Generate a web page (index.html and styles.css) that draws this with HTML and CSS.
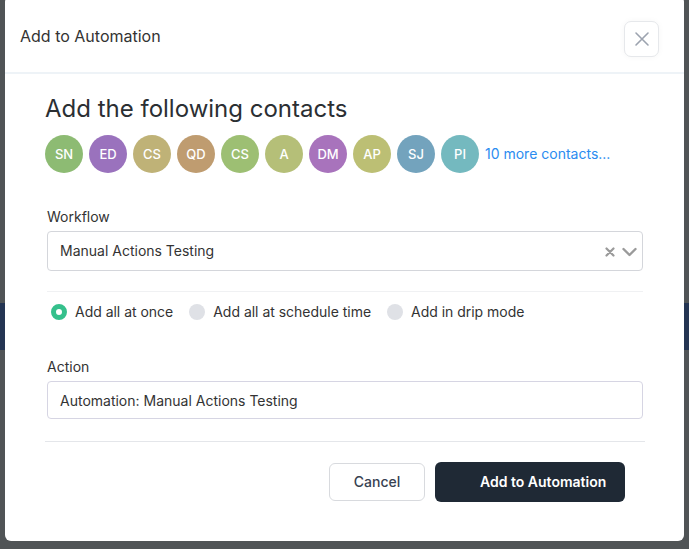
FILE: index.html
```html
<!DOCTYPE html>
<html>
<head>
<meta charset="utf-8">
<link rel="stylesheet" href="styles.css">
</head>
<body>
<div class="backdrop">
  <div class="page-band"></div>
</div>
<div class="modal">
  <div class="modal-header">
    <div class="modal-title">Add to Automation</div>
    <button class="close-btn" aria-label="Close">
      <svg width="16" height="16" viewBox="0 0 16 16"><path d="M2 2 L14 14 M14 2 L2 14" stroke="#9ca3af" stroke-width="1.6" stroke-linecap="round" fill="none"/></svg>
    </button>
  </div>
  <div class="modal-body">
    <h2 class="heading">Add the following contacts</h2>
    <div class="avatars">
      <span class="avatar c1">SN</span>
      <span class="avatar c2">ED</span>
      <span class="avatar c3">CS</span>
      <span class="avatar c4">QD</span>
      <span class="avatar c5">CS</span>
      <span class="avatar c6">A</span>
      <span class="avatar c7">DM</span>
      <span class="avatar c8">AP</span>
      <span class="avatar c9">SJ</span>
      <span class="avatar c10">PI</span>
      <a class="more-link">10 more contacts...</a>
    </div>
    <div class="form">
      <div class="label label-first">Workflow</div>
      <div class="select">
        <span class="select-value">Manual Actions Testing</span>
        <span class="select-icons">
          <svg width="10" height="10" viewBox="0 0 10 10"><path d="M1.5 1.5 L8.5 8.5 M8.5 1.5 L1.5 8.5" stroke="#9a9a9a" stroke-width="2.2" stroke-linecap="round" fill="none"/></svg>
          <svg width="15" height="10" viewBox="0 0 15 10"><path d="M1.5 2 L7.5 8 L13.5 2" stroke="#9a9a9a" stroke-width="2.4" stroke-linecap="round" stroke-linejoin="round" fill="none"/></svg>
        </span>
      </div>
      <div class="divider-light"></div>
      <div class="radios">
        <label class="radio"><span class="dot checked"></span>Add all at once</label>
        <label class="radio"><span class="dot"></span>Add all at schedule time</label>
        <label class="radio"><span class="dot"></span>Add in drip mode</label>
      </div>
      <div class="label label-action">Action</div>
      <div class="input">Automation: Manual Actions Testing</div>
    </div>
    <div class="divider"></div>
    <div class="actions">
      <button class="btn btn-cancel">Cancel</button>
      <button class="btn btn-primary">Add to Automation</button>
    </div>
  </div>
</div>
</body>
</html>
```

FILE: styles.css
```css
* { box-sizing: border-box; }

html, body {
  margin: 0;
  padding: 0;
  width: 689px;
  height: 549px;
  overflow: hidden;
}

body {
  background: #505456;
  font-family: Inter, "Noto Sans", sans-serif;
  color: #333333;
  position: relative;
}

.backdrop {
  position: absolute;
  inset: 0;
  background: #505456;
}

.page-band {
  margin-top: 303px;
  height: 47px;
  background: #243553;
}

.modal {
  position: absolute;
  left: 5px;
  top: -4px;
  width: 679px;
  height: 545px;
  background: #ffffff;
  border-radius: 6px;
  display: flex;
  flex-direction: column;
}

.modal-header {
  height: 78px;
  border-bottom: 2px solid #eef3f7;
  display: flex;
  align-items: center;
  justify-content: space-between;
  padding: 0 25px 0 15px;
}

.modal-title {
  font-size: 16px;
  line-height: 20px;
  color: #333333;
  margin-top: 4px;
}

.close-btn {
  width: 35px;
  height: 36px;
  border: 1px solid #e6e8eb;
  border-radius: 7px;
  background: #ffffff;
  display: flex;
  align-items: center;
  justify-content: center;
  padding: 0;
  margin-top: 9px;
  box-shadow: 0 0 6px rgba(0, 0, 0, 0.04);
}

.modal-body {
  padding: 20px 39px 0 40px;
}

.heading {
  margin: 0;
  font-size: 24px;
  line-height: 30px;
  font-weight: 400;
  color: #2b2f33;
}

.avatars {
  margin-top: 11px;
  display: flex;
  align-items: center;
  gap: 6px;
}

.avatar {
  width: 38px;
  height: 38px;
  border-radius: 50%;
  display: flex;
  align-items: center;
  justify-content: center;
  color: #ffffff;
  font-size: 13px;
  font-weight: 500;
}

.c1 { background: #8dbb73; }
.c2 { background: #9a72bd; }
.c3 { background: #bfb277; }
.c4 { background: #bf9c70; }
.c5 { background: #9dbf73; }
.c6 { background: #b5bf78; }
.c7 { background: #a873bc; }
.c8 { background: #bcbf74; }
.c9 { background: #73a3bd; }
.c10 { background: #74b9bf; }

.more-link {
  font-size: 14px;
  color: #2b8cf0;
  margin-top: -2px;
}

.form {
  padding: 0 2px;
}

.label {
  font-size: 14px;
  line-height: 20px;
  color: #333333;
}

.label-first { margin-top: 34px; }
.label-action { margin-top: 35px; }

.select {
  margin-top: 4px;
  height: 40px;
  border: 1px solid #d4d6db;
  border-radius: 4px;
  display: flex;
  align-items: center;
  justify-content: space-between;
  padding: 0 5px 0 12px;
  font-size: 14px;
  color: #333333;
}

.select-value { margin-top: -2px; }

.select-icons {
  display: flex;
  align-items: center;
  gap: 7px;
  padding-top: 2px;
}

.divider-light {
  margin-top: 20px;
  height: 1px;
  background: #f0f1f3;
}

.radios {
  margin-top: 10px;
  height: 20px;
  display: flex;
  align-items: center;
  padding-left: 4px;
  gap: 16px;
}

.radio {
  display: flex;
  align-items: center;
  gap: 8px;
  font-size: 14px;
  letter-spacing: -0.02px;
  color: #333333;
  margin-top: -1px;
}

.dot {
  width: 16px;
  height: 16px;
  border-radius: 50%;
  background: #dfe1e6;
}

.dot.checked {
  background: #ffffff;
  border: 5px solid #35c08c;
}

.input {
  margin-top: 4px;
  height: 38px;
  border: 1px solid #d6d5e3;
  border-radius: 4px;
  display: flex;
  align-items: center;
  padding-left: 12px;
  font-size: 14px;
  color: #333333;
}

.divider {
  margin-top: 22px;
  height: 1px;
  background: #e4e6ea;
}

.actions {
  margin-top: 20px;
  display: flex;
  justify-content: flex-end;
  align-items: center;
  gap: 10px;
  padding-right: 20px;
}

.btn {
  font-family: Inter, "Noto Sans", sans-serif;
  font-size: 14px;
  border-radius: 6px;
  cursor: pointer;
}

.btn-cancel {
  width: 96px;
  height: 38px;
  background: #ffffff;
  border: 1px solid #d8dade;
  color: #374151;
  font-weight: 500;
  padding-bottom: 2px;
}

.btn-primary {
  width: 190px;
  height: 40px;
  background: #1f2935;
  border: none;
  color: #ffffff;
  font-weight: 600;
  padding: 0 18px 2px 45px;
  text-align: left;
}
```
